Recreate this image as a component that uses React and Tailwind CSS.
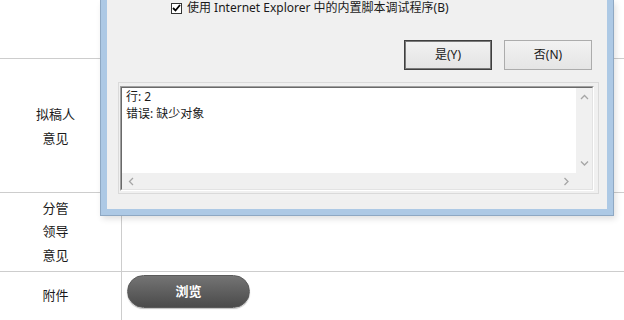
import React from "react";

function Chevron({ dir }) {
  const paths = {
    up: "M1 5 L4.5 1.5 L8 5",
    down: "M1 1.5 L4.5 5 L8 1.5",
    left: "M5 1 L1.5 4.5 L5 8",
    right: "M1.5 1 L5 4.5 L1.5 8",
  };
  const vertical = dir === "up" || dir === "down";
  return (
    <svg
      width={vertical ? 9 : 7}
      height={vertical ? 7 : 9}
      viewBox={vertical ? "0 0 9 7" : "0 0 7 9"}
      fill="none"
      stroke="#a6a6a6"
      strokeWidth="1.3"
    >
      <path d={paths[dir]} />
    </svg>
  );
}

export default function App() {
  return (
    <div className="relative w-[624px] h-[320px] overflow-hidden bg-white font-['Noto_Sans','Noto_Sans_CJK_SC',sans-serif] text-[#1a1a1a]">
      {/* background table */}
      <div className="flex flex-col">
        <div className="flex h-[59px] border-b border-[#cdcdcd]">
          <div className="w-[122px] border-r border-[#cdcdcd]" />
          <div className="flex-1" />
        </div>
        <div className="flex h-[134px] border-b border-[#cdcdcd]">
          <div className="w-[122px] border-r border-[#cdcdcd] pr-[10px] flex flex-col items-center justify-center text-[13px] leading-[24px]">
            <span>拟稿人</span>
            <span>意见</span>
          </div>
          <div className="flex-1" />
        </div>
        <div className="flex h-[79px] border-b border-[#cdcdcd]">
          <div className="w-[122px] border-r border-[#cdcdcd] pr-[10px] flex flex-col items-center justify-center text-[13px] leading-[23.5px]">
            <span>分管</span>
            <span>领导</span>
            <span>意见</span>
          </div>
          <div className="flex-1" />
        </div>
        <div className="flex h-[48px]">
          <div className="w-[122px] border-r border-[#cdcdcd] pr-[10px] flex items-center justify-center text-[13px]">
            附件
          </div>
          <div className="flex-1 pl-[5px] pt-[3px]">
            <button className="w-[123px] h-[33px] rounded-full bg-gradient-to-b from-[#747474] to-[#4b4b4b] border border-[#5a5a5a] shadow-[0_1px_1px_rgba(0,0,0,0.25)] text-white text-[13px] font-bold flex items-center justify-center">
              浏览
            </button>
          </div>
        </div>
      </div>

      {/* dialog overlay */}
      <div className="absolute left-[100px] top-0 w-[514px] h-[216px] bg-[#adc9e5] border-x border-b border-[#8ea8c3] px-[6px] pb-[6px] shadow-[2px_3px_6px_rgba(0,0,0,0.12)]">
        <div className="h-full bg-[#f0f0f0] flex flex-col text-[12px]">
          <div className="h-[15px] pt-[1px] flex items-center pl-[64px]">
            <div className="w-[11px] h-[11px] border border-[#333] bg-white flex items-center justify-center">
              <svg width="9" height="8" viewBox="0 0 9 8" fill="none" stroke="#000" strokeWidth="1.8">
                <path d="M1 4 L3.5 6.5 L8 1" />
              </svg>
            </div>
            <span className="ml-[5px] leading-[14px]">使用 Internet Explorer 中的内置脚本调试程序(B)</span>
          </div>

          <div className="mt-[25px] flex justify-end gap-[12px] pr-[15px]">
            <button className="w-[88px] h-[30px] border border-[#3f3f3f] shadow-[inset_0_0_0_1px_#7a7a7a] bg-gradient-to-b from-[#f2f2f2] to-[#e3e3e3] text-[12px] flex items-center justify-center">
              是(Y)
            </button>
            <button className="w-[88px] h-[30px] border border-[#acacac] bg-gradient-to-b from-[#f2f2f2] to-[#e5e5e5] text-[12px] flex items-center justify-center">
              否(N)
            </button>
          </div>

          <div className="mt-[12px] ml-[11px] w-[481px] h-[112px] border border-[#dadada] pt-[3px] pl-[1px] pr-[4px] pb-[2px]">
            <div className="h-full border-t border-l border-[#a0a0a0] border-r border-b border-r-white border-b-white">
              <div className="h-full border-t border-l border-[#696969] border-r border-b border-r-[#e3e3e3] border-b-[#e3e3e3] flex flex-col">
                <div className="flex flex-1 min-h-0">
                  <div className="flex-1 bg-white pl-[4px] leading-[17px] text-[12px]">
                    <div>行: 2</div>
                    <div>错误: 缺少对象</div>
                  </div>
                  <div className="w-[16px] bg-[#f0f0f0] flex flex-col items-center justify-between py-[6px]">
                    <Chevron dir="up" />
                    <Chevron dir="down" />
                  </div>
                </div>
                <div className="h-[16px] flex">
                  <div className="flex-1 bg-[#f0f0f0] flex items-center justify-between px-[6px]">
                    <Chevron dir="left" />
                    <Chevron dir="right" />
                  </div>
                  <div className="w-[16px] bg-[#f0f0f0]" />
                </div>
              </div>
            </div>
          </div>
        </div>
      </div>
    </div>
  );
}
